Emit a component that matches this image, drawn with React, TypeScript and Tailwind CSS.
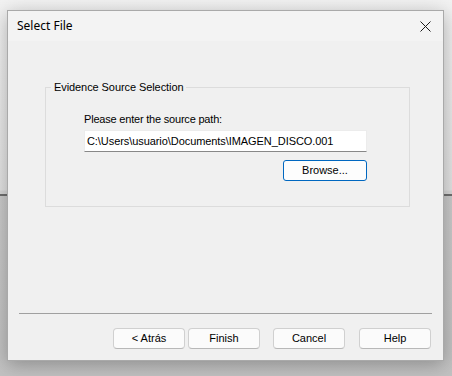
const Btn = ({ label, className = "" }: { label: string; className?: string }) => (
  <button
    className={`h-[21px] w-[72px] rounded-[4px] border border-[#d0d0d0] border-b-[#b8b8b8] bg-[#fbfbfb] text-[11px] leading-none text-black ${className}`}
  >
    {label}
  </button>
);

const App = () => {
  return (
    <div
      className="h-[376px] w-[452px] overflow-hidden bg-[linear-gradient(to_bottom,#f2f2f2_0px,#e3e3e3_190px,#d8d8d8_191px,#d8d8d8_194px,#6f6f6f_194px,#6f6f6f_196px,#cbcbcb_196px,#c2c2c2_376px)] pl-[7px] pt-[10px]"
      style={{ fontFamily: '"Liberation Sans", Arial, sans-serif' }}
    >
      <div className="flex h-[351px] w-[437px] flex-col border border-[#a9a9a9] bg-[#f0f0f0] shadow-[0_4px_18px_rgba(0,0,0,0.28)]">
        {/* title bar */}
        <div className="flex h-[30px] items-center justify-between bg-[#f3f3f3] pl-[9px] pr-[10px]">
          <span className="text-[12px] text-black" style={{ fontFamily: '"Noto Sans", "Liberation Sans", sans-serif' }}>
            Select File
          </span>
          <svg width="11" height="11" viewBox="0 0 11 11" className="mr-[2px]">
            <path d="M0.5 0.5 L10.5 10.5 M10.5 0.5 L0.5 10.5" stroke="#1b1b1b" strokeWidth="1" />
          </svg>
        </div>

        {/* body */}
        <div className="flex flex-1 flex-col">
          <div className="relative ml-[37px] mt-[46px] h-[120px] w-[365px] border border-[#dcdcdc] pl-[38px] pt-[25px]">
            <span className="absolute -top-[7px] left-[5px] bg-[#f0f0f0] px-[3px] text-[11px] leading-[13px] tracking-[-0.08px] text-black">
              Evidence Source Selection
            </span>
            <div className="text-[11px] leading-[13px] tracking-[-0.2px] text-black">Please enter the source path:</div>
            <div className="mt-[4px] flex h-[22px] w-[283px] items-center border border-[#ececec] border-b-[#888888] bg-white pl-[2px] text-[11px] tracking-[-0.07px] text-black">
              C:\Users\usuario\Documents\IMAGEN_DISCO.001
            </div>
            <div className="mt-[8px] flex w-[283px] justify-end">
              <button className="h-[21px] w-[84px] rounded-[3px] border border-[#0067c0] bg-[#fdfdfd] text-[11px] leading-none text-black">
                Browse...
              </button>
            </div>
          </div>

          <div className="flex-1" />

          <div className="mx-[11px] h-px bg-[#a0a0a0]" />

          <div className="mb-[11px] mr-[12px] mt-[14px] flex justify-end">
            <Btn label="< Atrás" />
            <Btn label="Finish" className="ml-[3px]" />
            <Btn label="Cancel" className="ml-[13px]" />
            <Btn label="Help" className="ml-[14px]" />
          </div>
        </div>
      </div>
    </div>
  );
};

export default App;
